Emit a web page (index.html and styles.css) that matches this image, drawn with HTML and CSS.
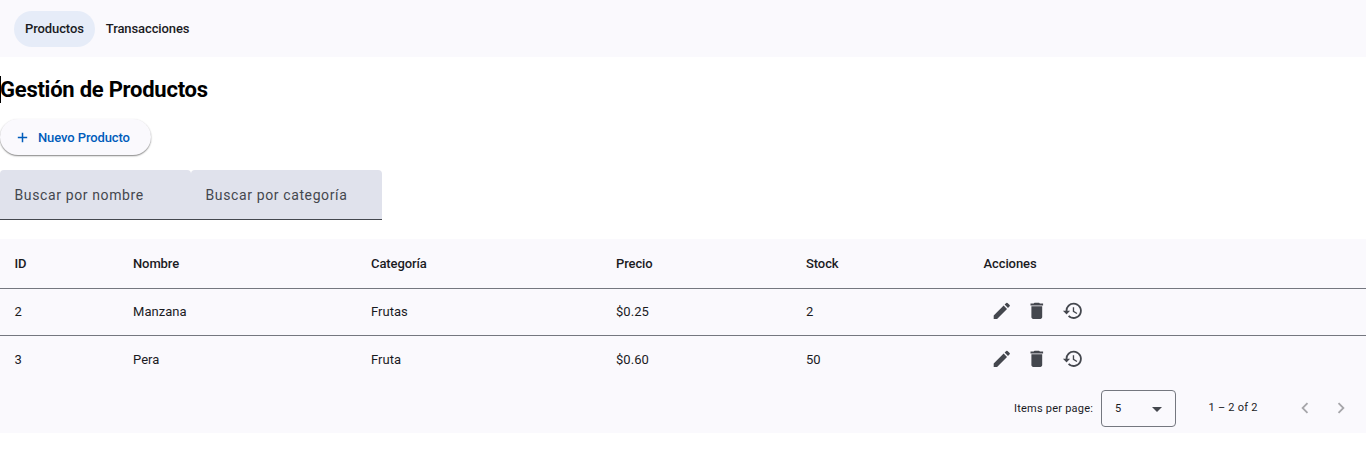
FILE: index.html
```html
<!DOCTYPE html>
<html lang="es">
<head>
<meta charset="utf-8">
<title>Gestión de Productos</title>
<link rel="stylesheet" href="styles.css">
</head>
<body>
<nav class="toolbar"><a class="nav-link active">Productos</a><a class="nav-link">Transacciones</a></nav>
<main>
<h2 class="title">Gestión de Productos</h2>
<button class="new-button"><svg class="plus" viewBox="0 0 24 24"><path d="M19.500 13.200h-6.300v6.300h-2.400v-6.300H4.500v-2.400h6.300V4.500h2.400v6.300h6.300z"/></svg>Nuevo Producto</button>
<div class="filters"><div class="field">Buscar por nombre</div><div class="field">Buscar por categoría</div></div>
<section class="table">
<div class="row head"><span>ID</span><span>Nombre</span><span>Categoría</span><span>Precio</span><span>Stock</span><span>Acciones</span></div>
<div class="row"><span>2</span><span>Manzana</span><span>Frutas</span><span>$0.25</span><span>2</span><span class="actions">
<svg viewBox="0 0 24 24"><path d="M3 17.25V21h3.75L17.81 9.94l-3.75-3.75L3 17.25zM20.71 7.04a1 1 0 0 0 0-1.41l-2.34-2.34a1 1 0 0 0-1.41 0l-1.83 1.83 3.75 3.75 1.83-1.83z"/></svg>
<svg viewBox="0 0 24 24"><path d="M6 19c0 1.1.9 2 2 2h8c1.1 0 2-.9 2-2V7H6v12zM19 4h-3.500l-1-1h-5l-1 1H5v2h14V4z"/></svg>
<svg viewBox="0 0 24 24"><path d="M13 3a9 9 0 0 0-9 9H1l3.890 3.890.070.140L9 12H6a7 7 0 1 1 2.060 4.940l-1.420 1.420A9 9 0 1 0 13 3zm-1 5v5l4.280 2.540.720-1.210-3.500-2.080V8H12z"/></svg></span></div>
<div class="row last"><span>3</span><span>Pera</span><span>Fruta</span><span>$0.60</span><span>50</span><span class="actions">
<svg viewBox="0 0 24 24"><path d="M3 17.25V21h3.75L17.81 9.94l-3.75-3.75L3 17.25zM20.71 7.04a1 1 0 0 0 0-1.41l-2.34-2.34a1 1 0 0 0-1.41 0l-1.83 1.83 3.75 3.75 1.83-1.83z"/></svg>
<svg viewBox="0 0 24 24"><path d="M6 19c0 1.1.9 2 2 2h8c1.1 0 2-.9 2-2V7H6v12zM19 4h-3.500l-1-1h-5l-1 1H5v2h14V4z"/></svg>
<svg viewBox="0 0 24 24"><path d="M13 3a9 9 0 0 0-9 9H1l3.890 3.890.070.140L9 12H6a7 7 0 1 1 2.060 4.940l-1.420 1.420A9 9 0 1 0 13 3zm-1 5v5l4.280 2.540.720-1.210-3.500-2.080V8H12z"/></svg></span></div>
<footer class="paginator"><span>Items per page:</span><div class="select"><span>5</span><svg viewBox="0 0 10 5"><path d="M0 0h10L5 5z"/></svg></div><span class="range">1 – 2 of 2</span>
<svg class="arrow" viewBox="0 0 24 24"><path d="M15.410 7.410L14 6l-6 6 6 6 1.410-1.410L10.830 12z"/></svg><svg class="arrow" viewBox="0 0 24 24"><path d="M10 6L8.590 7.410 13.170 12l-4.580 4.590L10 18l6-6z"/></svg></footer>
</section>
</main>
</body>
</html>
```
FILE: styles.css
```css
* { box-sizing: border-box; }
body { margin: 0; background: #fff; color: #1a1b1f; font-family: Roboto, sans-serif; font-size: 13px; }
.toolbar { height: 57px; padding-left: 14px; background: #faf9fd; display: flex; align-items: center; }
.nav-link { height: 36px; padding: 0 11px; border-radius: 18px; display: flex; align-items: center; font-weight: 500; letter-spacing: -.1px; }
.active { background: #e6ecf8; }
.title { margin: 19px 0 16px; font-size: 22px; line-height: 27px; font-weight: 700; letter-spacing: -.25px; color: #000; box-shadow: inset 1px 0 #000; }
.new-button { width: 151px; height: 36px; padding: 0 0 0 15px; border: 0; border-radius: 18px; background: #faf9fd; color: #005cbb; font: 500 13px Roboto, sans-serif; letter-spacing: -.1px; display: flex; align-items: center; gap: 8px; box-shadow: 0 1px 2px #0005, 0 1px 1px #0003; }
.plus { width: 15px; height: 15px; fill: currentColor; }
.filters { display: flex; margin-top: 15px; }
.field { width: 191px; height: 50px; padding-left: 14.5px; display: flex; align-items: center; background: #e0e2ec; border-bottom: 1px solid #44474e; border-radius: 4px 4px 0 0; color: #44474e; font-size: 14px; letter-spacing: .62px; }
.table { margin-top: 19px; height: 194px; background: #faf9fd; }
.row { height: 47px; padding: 0 0 1px 14.5px; display: grid; grid-template-columns: 118.5px 238px 245px 190px 177.5px 1fr; align-items: center; border-bottom: 1px solid #74777f; letter-spacing: .04px; }
.head { height: 50px; padding-bottom: 0; font-weight: 500; letter-spacing: -.1px; }
.last { border: 0; padding-bottom: 0; }
.actions { display: flex; gap: 14.4px; padding: 0 0 1px 7px; }
.actions svg { width: 21.6px; height: 21.6px; fill: #44474e; }
.paginator { height: 50px; display: flex; align-items: center; padding-left: 1014px; font-size: 11px; letter-spacing: .22px; }
.select { width: 75px; height: 37px; margin-left: 7.5px; padding: 0 13px 0 13.5px; border: 1px solid #74777f; border-radius: 4px; display: flex; align-items: center; justify-content: space-between; }
.select svg { width: 10px; height: 5px; margin-top: 2px; fill: #44474e; }
.range { width: 85px; margin-left: 33px; padding-bottom: 2px; }
.arrow { width: 22px; height: 22px; margin-right: 14px; fill: #a6a6aa; }
```
